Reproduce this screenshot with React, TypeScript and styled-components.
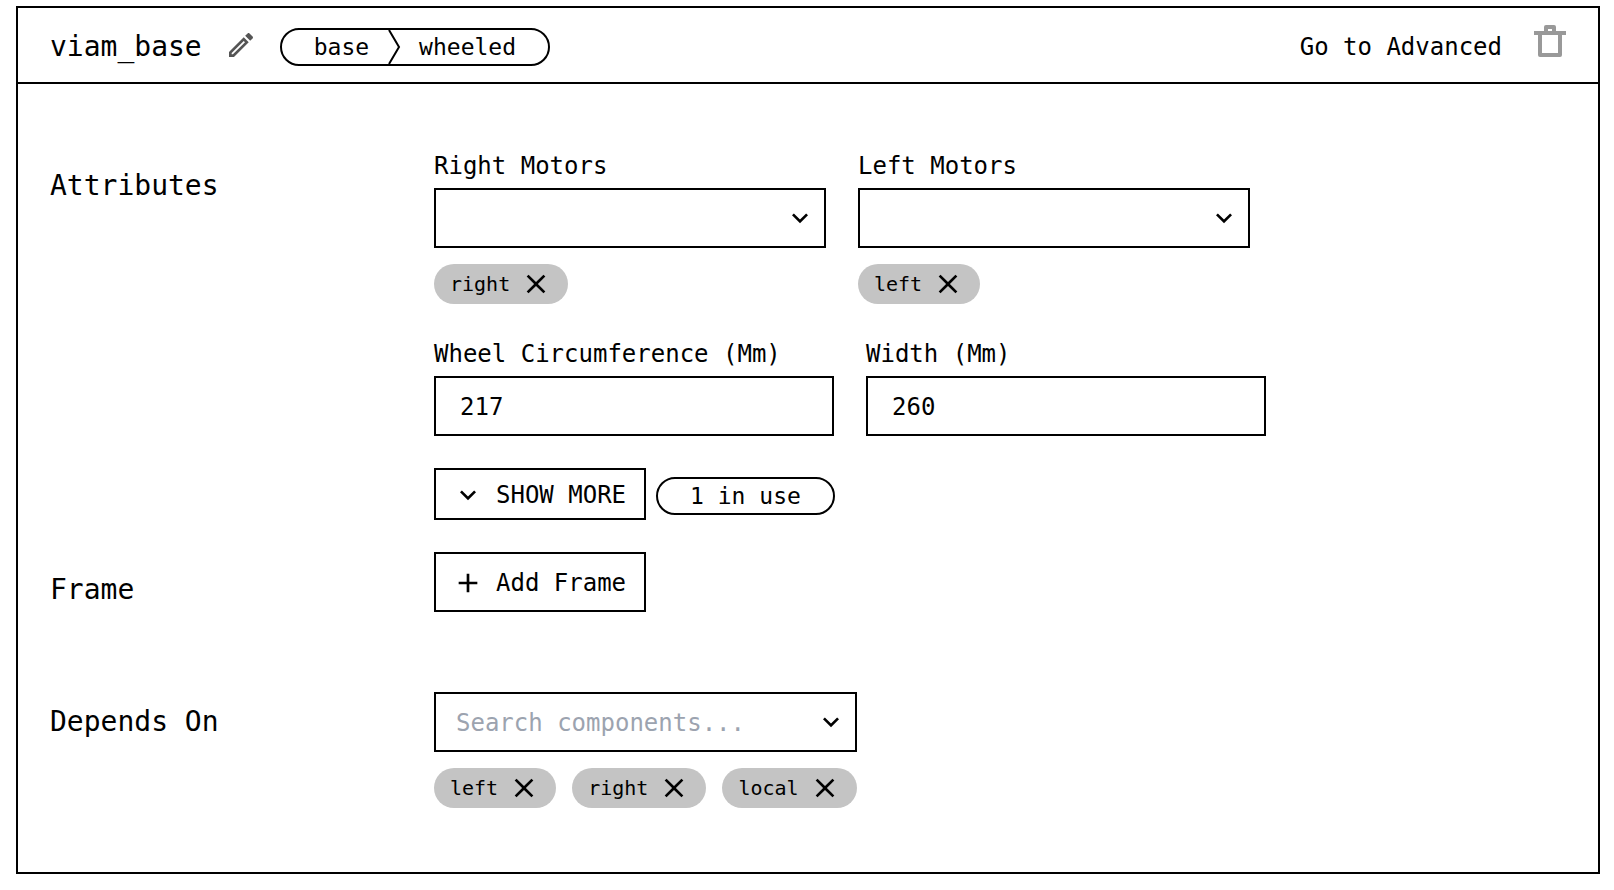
import React from "react";
import styled, { createGlobalStyle } from "styled-components";

const GlobalStyle = createGlobalStyle`
  *, *::before, *::after { box-sizing: border-box; }
  body { margin: 0; background: #fff; }
  body, button, input, select {
    font-family: "DejaVu Sans Mono", monospace;
    color: #000;
  }
`;

const Card = styled.section`
  margin: 6px 14px 16px 16px;
  border: 2px solid #000;
  background: #fff;
`;

const Header = styled.header`
  display: flex;
  align-items: center;
  justify-content: space-between;
  min-height: 76px;
  padding: 4px 32px 0;
  border-bottom: 2px solid #000;
`;

const HeaderGroup = styled.div<{ $gap: number }>`
  display: flex;
  align-items: center;
  gap: ${(p) => p.$gap}px;
`;

const Name = styled.h1`
  margin: 0;
  font-size: 28px;
  line-height: 40px;
  font-weight: 400;
`;

const IconButton = styled.button<{ $color?: string; $lift?: number }>`
  display: flex;
  padding: 0 0 ${(p) => p.$lift ?? 0}px;
  border: 0;
  background: none;
  color: ${(p) => p.$color ?? "#000"};
  cursor: pointer;
`;

const TextButton = styled.button`
  padding: 0;
  border: 0;
  background: none;
  font-size: 24px;
  line-height: 32px;
  cursor: pointer;
`;

const Pill = styled.span`
  display: inline-flex;
  align-items: center;
  height: 38px;
  padding: 0 32px;
  border: 2px solid #000;
  border-radius: 19px;
  font-size: 23px;
  line-height: 32px;
`;

const PillDivider = styled.svg`
  margin: 0 18px;
`;

const Body = styled.div`
  display: flex;
  flex-direction: column;
  padding: 64px 32px;
`;

const Section = styled.section<{ $space?: number }>`
  display: grid;
  grid-template-columns: 384px minmax(0, 1fr);
  margin-bottom: ${(p) => p.$space ?? 0}px;
`;

const SectionTitle = styled.h2`
  margin: 16px 0 0;
  font-size: 28px;
  line-height: 44px;
  font-weight: 400;
`;

const SectionContent = styled.div`
  display: flex;
  flex-direction: column;
  align-items: flex-start;
  gap: 32px;
`;

const FieldRow = styled.div`
  display: flex;
  flex-wrap: wrap;
  gap: 32px;
`;

const Field = styled.div<{ $width?: number }>`
  display: flex;
  flex-direction: column;
  width: ${(p) => (p.$width ? `${p.$width}px` : "auto")};
`;

const Label = styled.label`
  margin-bottom: 4px;
  font-size: 24px;
  line-height: 36px;
`;

const SelectBox = styled.div`
  display: grid;
  align-items: center;

  > * { grid-area: 1 / 1; }
  > svg {
    justify-self: end;
    margin-right: 10px;
    pointer-events: none;
  }
`;

const Select = styled.select`
  appearance: none;
  width: 100%;
  height: 60px;
  padding: 0 48px 0 20px;
  border: 2px solid #000;
  border-radius: 0;
  background: #fff;
  font-size: 24px;
`;

const Input = styled.input<{ $inset?: number }>`
  width: 100%;
  min-width: 0;
  height: 60px;
  padding: 2px ${(p) => p.$inset ?? 24}px 0;
  border: 2px solid #000;
  border-radius: 0;
  background: #fff;
  font-size: 24px;

  &::placeholder { color: #9ca3af; opacity: 1; }
`;

const ChipRow = styled.div`
  display: flex;
  gap: 16px;
  margin-top: 16px;
`;

const ChipBox = styled.span`
  display: inline-flex;
  align-items: center;
  gap: 10px;
  height: 40px;
  padding: 0 16px;
  border-radius: 20px;
  background: #c4c4c4;
  font-size: 20px;
  line-height: 28px;
`;

const ButtonRow = styled.div`
  display: flex;
  align-items: center;
  gap: 10px;

  > ${Pill} { margin: 4px 0 0; }
`;

const OutlineButton = styled.button<{ $height: number }>`
  display: flex;
  align-items: center;
  gap: 12px;
  height: ${(p) => p.$height}px;
  padding: 2px 18px 0 16px;
  border: 2px solid #000;
  background: #fff;
  font-size: 24px;
  line-height: 32px;
  cursor: pointer;
`;

const DependsField = styled(Field)`
  margin-top: 8px;
`;

type IconProps = { d: string; size: number };

const Icon = ({ d, size }: IconProps) => (
  <svg width={size} height={size} viewBox="0 0 24 24" fill="currentColor" aria-hidden="true">
    <path d={d} />
  </svg>
);

const PENCIL =
  "M14.06 9l.94.94L5.92 19H5v-.92L14.06 9M17.66 3c-.25 0-.51.1-.7.29l-1.83 1.83 3.75 3.75 1.83-1.83c.39-.39.39-1.04 0-1.41l-2.34-2.34c-.2-.2-.45-.29-.71-.29M14.06 6.19L3 17.25V21h3.75L17.81 9.94l-3.75-3.75z";
const CHEVRON = "M7.41 8.58L12 13.17l4.59-4.59L18 10l-6 6-6-6z";
const CLOSE =
  "M19 6.41L17.59 5 12 10.59 6.41 5 5 6.41 10.59 12 5 17.59 6.41 19 12 13.41 17.59 19 19 17.59 13.41 12z";
const PLUS = "M19 13h-6v6h-2v-6H5v-2h6V5h2v6h6z";

const TrashIcon = () => (
  <svg width="32" height="32" viewBox="0 0 32 32" fill="none" stroke="currentColor" strokeWidth="4" strokeLinejoin="round" aria-hidden="true">
    <path d="M0 8h32M12 8V2h8v6M6 8v22h20V8" />
  </svg>
);

const Chip = ({ name }: { name: string }) => (
  <ChipBox>
    {name}
    <IconButton type="button" aria-label={`Remove ${name}`}>
      <Icon d={CLOSE} size={32} />
    </IconButton>
  </ChipBox>
);

const MotorField = ({ id, label, chip }: { id: string; label: string; chip: string }) => (
  <Field $width={392}>
    <Label htmlFor={id}>{label}</Label>
    <SelectBox>
      <Select id={id} defaultValue="">
        <option value="" />
      </Select>
      <Icon d={CHEVRON} size={32} />
    </SelectBox>
    <ChipRow>
      <Chip name={chip} />
    </ChipRow>
  </Field>
);

const NumberField = ({ id, label, value }: { id: string; label: string; value: string }) => (
  <Field $width={400}>
    <Label htmlFor={id}>{label}</Label>
    <Input id={id} inputMode="numeric" defaultValue={value} />
  </Field>
);

export default function App() {
  return (
    <>
      <GlobalStyle />
      <Card>
        <Header>
          <HeaderGroup $gap={23}>
            <Name>viam_base</Name>
            <IconButton type="button" aria-label="Rename" $color="#555" $lift={4}>
              <Icon d={PENCIL} size={32} />
            </IconButton>
            <Pill>
              base
              <PillDivider width="14" height="34" viewBox="0 0 14 34" fill="none" stroke="#000" strokeWidth="2" aria-hidden="true">
                <path d="M2 0l10 17L2 34" />
              </PillDivider>
              wheeled
            </Pill>
          </HeaderGroup>
          <HeaderGroup $gap={32}>
            <TextButton type="button">Go to Advanced</TextButton>
            <IconButton type="button" aria-label="Delete component" $color="#999" $lift={12}>
              <TrashIcon />
            </IconButton>
          </HeaderGroup>
        </Header>
        <Body>
          <Section $space={32}>
            <SectionTitle>Attributes</SectionTitle>
            <SectionContent>
              <FieldRow>
                <MotorField id="right-motors" label="Right Motors" chip="right" />
                <MotorField id="left-motors" label="Left Motors" chip="left" />
              </FieldRow>
              <FieldRow>
                <NumberField id="circumference" label="Wheel Circumference (Mm)" value="217" />
                <NumberField id="width" label="Width (Mm)" value="260" />
              </FieldRow>
              <ButtonRow>
                <OutlineButton type="button" $height={52}>
                  <Icon d={CHEVRON} size={32} />
                  SHOW MORE
                </OutlineButton>
                <Pill>1 in use</Pill>
              </ButtonRow>
            </SectionContent>
          </Section>
          <Section $space={72}>
            <SectionTitle>Frame</SectionTitle>
            <SectionContent>
              <OutlineButton type="button" $height={60}>
                <Icon d={PLUS} size={32} />
                Add Frame
              </OutlineButton>
            </SectionContent>
          </Section>
          <Section>
            <SectionTitle>Depends On</SectionTitle>
            <SectionContent>
              <DependsField>
                <SelectBox>
                  <Input $inset={20} placeholder="Search components..." aria-label="Depends on" />
                  <Icon d={CHEVRON} size={32} />
                </SelectBox>
                <ChipRow>
                  <Chip name="left" />
                  <Chip name="right" />
                  <Chip name="local" />
                </ChipRow>
              </DependsField>
            </SectionContent>
          </Section>
        </Body>
      </Card>
    </>
  );
}
